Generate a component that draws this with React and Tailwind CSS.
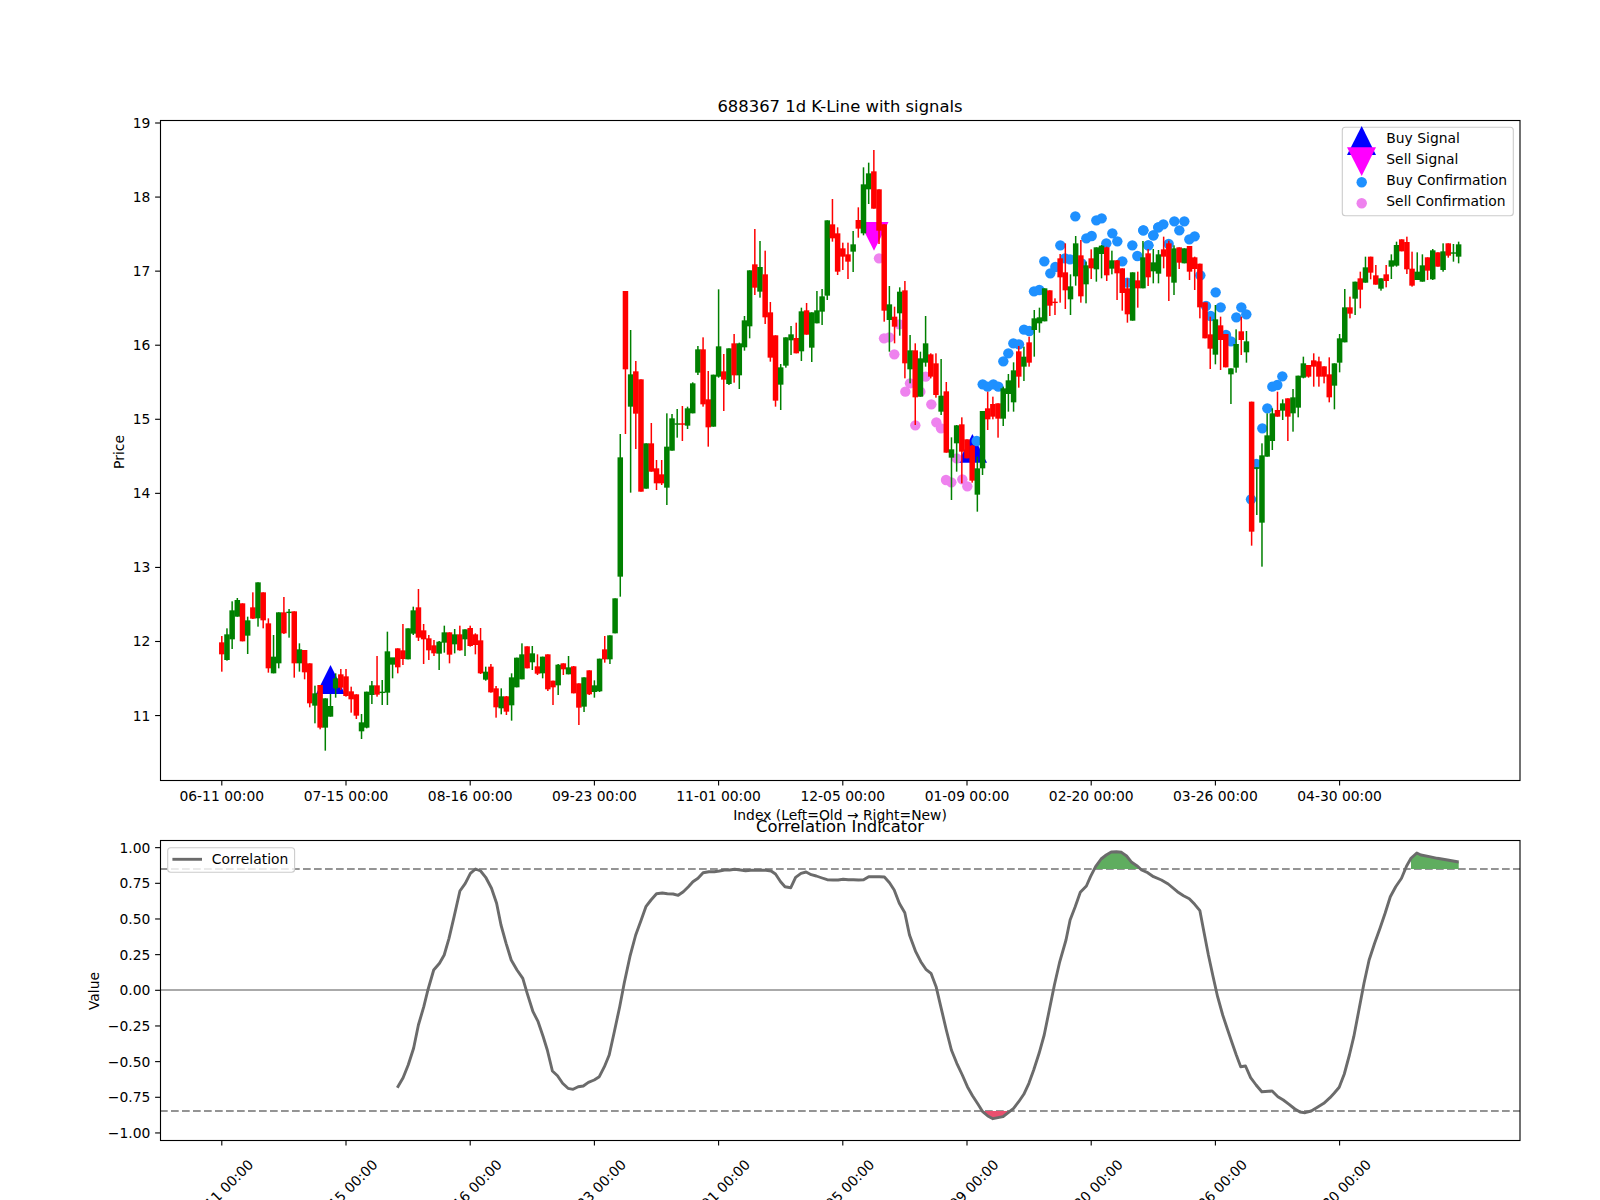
const CX = (i) => 221.8 + 5.175 * i;

// [colour, wickTop, bodyTop, bodyBottom, wickBottom], grouped by measuring window
const A = `r 228 247 283 335|g 205 223 300 302|g 124 151 238 267|g 114 120 170 170|r 130 130 244 244|g 170 181 227 282|r 97 142 176 177|g 67 67 175 200|r 97 97 181 205|r 175 190 325 338|g 225 290 340 340|g 157 157 310 325|r 111 157 220 222|g 147 155 157 233|r 154 154 310 353|g 250 268 310 335|r 270 270 337 358|r 310 310 430 442|g 377 400 437 490|r 375 375 503 508|g 415 415 503 572|g 402 438 470 470|g 340 355 385 413|r 327 343 383 390|r 327 349 408 410|r 380 394 418 458|r 403 403 467 477|g 462 487 514 537|g 395 395 503 505|g 363 376 405 432|r 288 376 404 410|g 360 395 397 435|g 215 274 398 435|g 295 292 314 355|r 265 265 322 340|r 192 271 297 315|g 205 205 298 298|g 140 151 221 225|r 87 142 233 243|r 192 211 238 312|r 225 235 271 300|r 240 256 280 288|g 243 245 281 330|g 197 217 248 278|r 217 217 284 310|g 207 223 253 280|r 197 223 271 272|g 208 208 238 288|r 197 204 258 260|r 220 223 255 283|r 204 241 340 342|g 320 335 359 362|r 312 320 397 398|r 378 385 442 473|g 385 409 445 463|r 408 409 455 465|g 340 352 436 482|g 293 293 382 382|g 250 283 358 358|r 259 259 325 325|g 258 280 307 330|r 283 319 341 345|g 290 290 340 355|r 283 283 388 393|r 362 362 382 435|g 312 314 376 405|r 310 310 328 345|g 288 322 343 343|r 318 319 400 400|r 370 370 443 495|g 352 352 440 456|r 331 331 403 405|g 361 376 396 413|g 296 296 394 396|r 228 268 298 308|g 226 226 298 312|g 115 115 220 220`;
const B = `g 522 592 950 1010|r 93 93 328 522|g 210 343 440 698|r 303 334 461 567|r 358 358 695 695|g 550 550 686 686|r 489 550 635 635|r 600 625 670 690|r 600 643 670 675|g 460 560 683 735|g 462 475 572 572|g 447 490 492 533|r 438 490 492 543|g 440 445 497 507|g 367 370 460 460|g 258 268 338 345|r 232 268 433 440|r 333 418 502 560|g 344 344 500 500|g 88 259 350 353|r 282 334 359 453|g 265 265 372 375|r 222 250 346 368|g 248 250 346 387|g 168 181 262 272|g 31 31 199 235|r -93 13 83 105|g -57 21 95 113|r -28 43 172 192|r 126 157 293 305|r 226 226 422 440|g 312 322 374 450|g 232 232 317 323|g 198 223 241 285|r 188 234 280 280|g 143 154 274 303|r 129 151 224 224|g 157 157 263 306|g 93 151 190 190|g 87 109 155 195|g -119 -119 107 120|r -183 -107 -65 -55|r -98 -80 35 45|r -52 -35 -10 30|r -52 -17 5 57|g -87 -47 -25 36|r -158 -120 -94 -67|g -278 -227 -80 -74|g -292 -260 -212 -168|r -330 -266 -154 -154|r -212 -212 -88 -48|r -107 -107 152 185|g 78 133 180 275|r 140 170 200 250|g 82 95 160 227`;
const C = `r 453 481 700 745|g 615 661 718 760|r 640 661 802 885|g 665 685 800 800|g 558 640 698 710|r 670 673 740 745|r 670 700 795 803|g 687 797 845 855|r 756 784 968 968|g 922 958 983 1110|g 885 886 940 1025|r 862 883 965 1060|r 928 928 985 985|r 945 947 1052 1058|g 980 1015 1094 1145|g 843 843 1015 1035|r 785 835 868 900|r 800 822 860 868|r 820 820 866 923|g 770 775 866 888|g 732 751 792 845|g 697 721 817 845|r 648 664 740 773|g 650 680 710 753|r 620 637 698 710|g 540 565 600 680|g 533 562 580 608|g 475 475 574 574|r 481 481 527 558|r 505 515 518 555|r 372 385 442 518|r 340 427 481 537|g 433 469 508 555|g 318 340 439 467|r 330 376 499 518|g 395 406 463 520|r 358 385 415 447|g 352 352 418 455|g 345 347 372 445|r 350 352 436 453|g 362 391 416 433|r 390 391 430 510|r 415 415 489 542|r 445 475 553 578|g 427 427 572 572|r 425 451 475 533|g 333 382 475 475|r 357 370 442 468|g 357 397 424 460|g 360 373 431 460`;
const D = `r 350 388 410 445|r 362 370 470 543|g 376 385 488 525|r 382 382 428 447|g 385 385 430 430|r 378 378 455 480|r 410 412 447 510|r 431 431 562 595|r 547 547 655 655|r 590 643 686 747|g 555 598 704 733|r 590 616 660 750|r 642 642 742 742|g 745 745 763 852|g 628 672 743 758|r 590 634 660 705|g 633 664 697 728|r 845 845 1235 1277|g 1042 1042 1045 1185|g 970 1006 1208 1340|g 880 946 1010 1010|g 865 880 963 990|r 815 870 890 890|g 838 850 872 900|r 835 835 890 963|g 807 832 880 935|g 767 767 863 892|g 710 730 773 775|r 735 735 770 773|r 700 721 740 800|r 710 724 770 800|r 739 739 770 790|r 712 763 832 847|g 730 730 797 868|g 642 655 728 757|g 507 562 667 667|r 530 562 581 595|g 485 485 536 585|r 455 475 509 565|g 410 442 488 488|r 410 410 458 478|r 435 466 494 494|g 475 475 506 512|r 435 463 483 502|g 403 421 440 477|g 365 375 437 440|r 358 358 394 394|r 350 366 448 462|r 395 446 497 500|g 397 455 480 480|g 403 436 485 485|r 412 412 452 480|g 387 391 478 480|r 397 397 440 440|g 370 394 450 455|r 370 370 407 413|g 372 397 400 425|g 365 373 410 430`;

const parse = (s, y0) =>
  s.split("|").map((row) => {
    const [c, ...n] = row.split(" ");
    return { c: c === "r" ? "#ff0000" : "#008000", v: n.map((z) => y0 + Number(z) / 3) };
  });
const candles = [...parse(A, 560), ...parse(B, 260), ...parse(C, 130), ...parse(D, 120)];

const z5 = ([x, y]) => [860 + x / 3, 130 + y / 3];
const z6 = ([x, y]) => [1140 + x / 3, 120 + y / 3];
const z7 = ([x, y]) => [1140 + x / 3, 380 + y / 3];

const blue = [
  ...[[350,933],[368,763],[383,770],[400,763],[415,770],[430,694],[445,670],[460,640],[477,643],[492,599],[508,603],[522,484],[538,480],[553,394],[571,430],[586,411],[601,346],[615,385],[630,388],[646,259],[665,400],[679,325],[695,318],[709,271],[725,265],[739,340],[757,310],[772,334],[787,394],[802,458],[817,346],[832,378],[850,301],[865,346],[880,316],[895,292]].map(z5),
  ...[[10,331],[25,376],[40,346],[55,322],[70,313],[86,372],[103,304],[118,331],[133,304],[148,358],[164,349],[181,466],[198,558],[212,588],[227,517],[242,562],[258,645],[273,664],[289,592],[304,562],[319,583],[397,800],[412,795],[427,769]].map(z6),
  ...[[333,358],[349,252],[367,145],[382,85]].map(z7),
];
const pink = [[57,385],[72,625],[88,622],[103,673],[118,583],[136,785],[150,760],[166,886],[181,785],[197,740],[214,823],[229,877],[243,895],[258,1050],[274,1057],[290,985],[307,1048],[322,1069]].map(z5);

const ticks = ["06-11","07-15","08-16","09-23","11-01","12-05","01-09","02-20","03-26","04-30"].map((d, k) => ({ x: CX(k * 24), t: `${d} 00:00` }));

const corrY = (v) => 990.3 - 142.65 * v;
const yTicksLow = [1, 0.75, 0.5, 0.25, 0, -0.25, -0.5, -0.75, -1];
const pFmt = (v) => (v < 0 ? "\u2212" : "") + Math.abs(v).toFixed(2);

const l8 = [[1168,923],[1185,893],[1200,855],[1216,805],[1230,735],[1246,680],[1258,630],[1275,570],[1292,550],[1306,525],[1320,475],[1335,410],[1352,333],[1368,310],[1383,280],[1398,267],[1413,273],[1428,292],[1445,325],[1460,370],[1473,435],[1488,490],[1503,540],[1520,570],[1537,595],[1550,640]];
const l9 = [[0,695],[15,725],[30,770],[42,810],[57,873],[72,887],[87,910],[103,925],[118,928],[133,920],[148,918],[163,907],[180,900],[195,890],[210,860],[224,825],[238,760],[255,680],[268,610],[285,530],[302,465],[318,420],[332,380],[347,360],[363,341],[380,339],[395,341],[412,342],[427,346],[442,335],[457,320],[470,305],[485,295],[500,278],[517,275],[533,275],[548,273],[563,270],[578,270],[593,268],[610,270],[625,272],[640,271],[655,271],[670,271],[685,271],[700,273],[713,282],[728,305],[741,320],[758,323],[772,292],[788,280],[803,276],[818,284],[833,288],[850,294],[865,299],[882,300],[897,300],[912,298],[927,299],[942,299],[957,300],[972,299],[987,290],[1003,290],[1018,290],[1033,291],[1048,308],[1062,330],[1077,370],[1093,398],[1107,465],[1125,515],[1140,545],[1155,568],[1170,580],[1185,620],[1200,685],[1215,750],[1230,810],[1246,850],[1262,885],[1277,920],[1292,947],[1308,972],[1322,995],[1337,1008],[1352,1016],[1367,1013],[1382,1010],[1398,997],[1413,985],[1428,965],[1443,943],[1458,910],[1472,870],[1488,820],[1503,765],[1518,690],[1533,615],[1548,548]];
const l10 = [[0,480],[12,420],[27,380],[42,337],[60,318],[72,290],[87,260],[103,237],[118,225],[133,216],[148,215],[163,217],[178,228],[193,247],[208,257],[222,270],[240,278],[257,290],[280,300],[300,312],[327,335],[345,347],[362,356],[378,373],[393,392],[405,455],[418,525],[432,590],[445,650],[460,705],[473,745],[488,790],[500,825],[513,860],[527,858],[542,893],[558,915],[575,935],[605,933],[622,950],[638,960],[655,973],[672,987],[687,996],[702,998],[720,993],[738,982],[757,970],[775,953],[787,940],[802,922],[817,882],[832,825],[845,770],[860,690],[875,610],[890,540],[906,490],[922,445],[937,400],[952,350],[968,320],[985,295],[1000,258],[1013,235],[1030,219],[1042,225],[1067,230],[1090,235],[1120,240],[1153,246]];

const p8 = ([x, y]) => [x / 2.94, 780 + y / 3];
const p9 = ([x, y]) => [533 + x / 2.94, 780 + y / 3];
const p10 = ([x, y]) => [1066 + x / 2.936, 780 + y / 3];
const pts = (a) => a.map(([x, y]) => `${x.toFixed(1)},${y.toFixed(1)}`).join(" ");
const corrLine = [...l8.map(p8), ...l9.map(p9), ...l10.map(p10)];

const green1 = [[87,267],[87,260],[103,237],[118,225],[133,216],[148,215],[163,217],[178,228],[193,247],[208,257],[218,267]].map(p10);
const green2 = [[1013,267],[1013,235],[1030,219],[1042,225],[1067,230],[1090,235],[1120,240],[1153,246],[1153,267]].map(p10);
const red1 = [[1325,993],[1337,1008],[1352,1016],[1367,1013],[1382,1010],[1398,993]].map(p9);
const red2 = [[680,993],[687,996],[702,998],[720,993]].map(p10);

function Candle({ i, c, v }) {
  const x = CX(i);
  const [wt, bt, bb, wb] = v;
  return (
    <g fill={c}>
      <rect x={x - 0.75} y={wt} width="1.5" height={Math.max(wb - wt, 1)} />
      <rect x={x - 2.75} y={bt} width="5.5" height={Math.max(bb - bt, 1.4)} />
    </g>
  );
}

export default function App() {
  return (
    <div className="w-[1600px] h-[1200px] overflow-hidden bg-white">
      <svg
        width="1600"
        height="1200"
        viewBox="0 0 1600 1200"
        className="block font-['DejaVu_Sans',sans-serif] text-[13.89px]"
        fill="#000000"
      >
        <title>688367 1d K-Line with signals</title>

        {/* Price panel */}
        <polygon points="316,694 345,694 330.5,665" fill="#0000ff" />
        <polygon points="958,462.7 987,462.7 972.4,434" fill="#0000ff" />
        <polygon points="859.5,222 888.5,222 874,250.7" fill="#ff00ff" />
        {pink.map(([x, y], k) => (
          <circle key={k} cx={x} cy={y} r="5.2" fill="#ee82ee" />
        ))}
        {blue.map(([x, y], k) => (
          <circle key={k} cx={x} cy={y} r="5.2" fill="#1e90ff" />
        ))}
        {candles.map((d, i) => (
          <Candle key={i} i={i} c={d.c} v={d.v} />
        ))}
        <rect x="160.5" y="120.5" width="1359.5" height="660" fill="none" stroke="#000" strokeWidth="1.11" />

        {[19, 18, 17, 16, 15, 14, 13, 12, 11].map((n, k) => {
          const y = 123 + k * 74.07;
          return (
            <g key={n}>
              <line x1="155.1" x2="160" y1={y} y2={y} stroke="#000" strokeWidth="1.11" />
              <text x="150.3" y={y + 5} textAnchor="end">{n}</text>
            </g>
          );
        })}
        {ticks.map(({ x, t }) => (
          <g key={t}>
            <line x1={x} x2={x} y1="780" y2="785.4" stroke="#000" strokeWidth="1.11" />
            <text x={x} y="801" textAnchor="middle">{t}</text>
          </g>
        ))}
        <text transform="translate(123.5 452) rotate(-90)" textAnchor="middle">Price</text>
        <text x="840" y="820" textAnchor="middle">Index (Left=Old → Right=New)</text>
        <text x="840" y="111.7" textAnchor="middle" className="text-[16.4px]">688367 1d K-Line with signals</text>

        {/* Price legend */}
        <rect x="1342.3" y="127.3" width="171" height="88.4" rx="3" fill="#ffffff" fillOpacity="0.8" stroke="#cccccc" strokeWidth="1.11" />
        <polygon points="1347,155 1376,155 1361.7,126" fill="#0000ff" />
        <polygon points="1347,147.3 1376,147.3 1361.7,176" fill="#ff00ff" />
        <circle cx="1361.7" cy="182.3" r="5.2" fill="#1e90ff" />
        <circle cx="1361.7" cy="203.3" r="5.2" fill="#ee82ee" />
        <text x="1386.3" y="143">Buy Signal</text>
        <text x="1386.3" y="164">Sell Signal</text>
        <text x="1386.3" y="185">Buy Confirmation</text>
        <text x="1386.3" y="206">Sell Confirmation</text>

        {/* Correlation panel */}
        <line x1="160" x2="1520" y1="990" y2="990" stroke="#aaaaaa" strokeWidth="2.08" />
        <line x1="160" x2="1520" y1="869" y2="869" stroke="#949494" strokeWidth="2.08" strokeDasharray="7.7 3.3" />
        <line x1="160" x2="1520" y1="1111" y2="1111" stroke="#949494" strokeWidth="2.08" strokeDasharray="7.7 3.3" />
        <polygon points={pts(green1)} fill="#5fad5f" />
        <polygon points={pts(green2)} fill="#5fad5f" />
        <polygon points={pts(red1)} fill="#e8506f" />
        <polygon points={pts(red2)} fill="#f4a9b8" />
        <polyline points={pts(corrLine)} fill="none" stroke="#6b6b6b" strokeWidth="2.9" strokeLinejoin="round" />
        <rect x="160.5" y="840.5" width="1359.5" height="300" fill="none" stroke="#000" strokeWidth="1.11" />

        {yTicksLow.map((v) => {
          const y = corrY(v);
          return (
            <g key={v}>
              <line x1="155.1" x2="160" y1={y} y2={y} stroke="#000" strokeWidth="1.11" />
              <text x="150.3" y={y + 5} textAnchor="end">{pFmt(v)}</text>
            </g>
          );
        })}
        {ticks.map(({ x, t }) => (
          <g key={t}>
            <line x1={x} x2={x} y1="1140" y2="1145.4" stroke="#000" strokeWidth="1.11" />
            <text transform={`translate(${x - 1} 1192) rotate(-45)`} y="5" textAnchor="middle">{t}</text>
          </g>
        ))}
        <text transform="translate(98.5 991) rotate(-90)" textAnchor="middle">Value</text>
        <text x="840" y="831.7" textAnchor="middle" className="text-[16.4px]">Correlation Indicator</text>

        <rect x="167.7" y="847.7" width="126.9" height="24.6" rx="3" fill="#ffffff" fillOpacity="0.8" stroke="#cccccc" strokeWidth="1.11" />
        <line x1="172.4" x2="202" y1="859.3" y2="859.3" stroke="#6b6b6b" strokeWidth="2.9" />
        <text x="211.8" y="864">Correlation</text>
      </svg>
    </div>
  );
}
